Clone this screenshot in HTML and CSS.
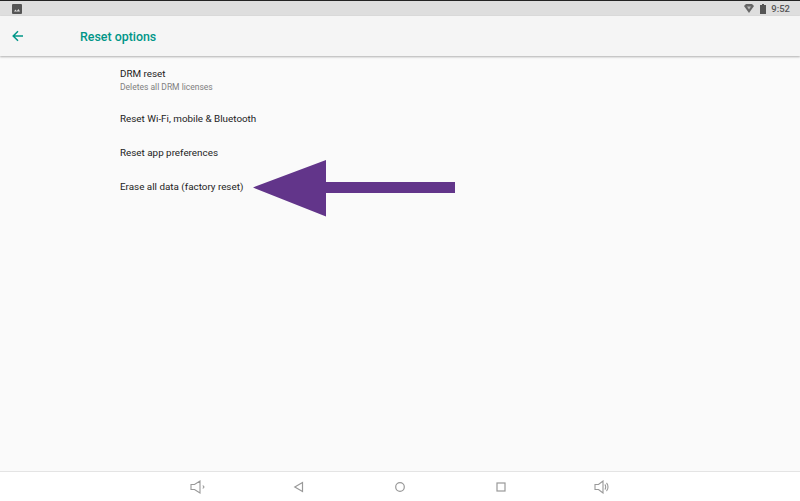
FILE: index.html
```html
<!DOCTYPE html>
<html lang="en">
<head>
<meta charset="utf-8">
<title>Reset options</title>
<link rel="stylesheet" href="styles.css">
</head>
<body>
<div class="screen">
  <div class="status">
    <svg class="st-img" width="10" height="10" viewBox="0 0 10 10"><rect width="10" height="10" rx="1" fill="#555"/><path d="M2 7.500 3.500 5.500 5 7.500ZM4.500 7.500 6.500 5 8 7.500Z" fill="#ddd"/></svg>
    <div class="status-right">
      <svg width="10" height="9" viewBox="0 0 10 9"><path d="M0 2 2 0H8L10 2 5 9Z" fill="#666"/><path d="M3 2.500 5 5.500 7 2.500Z" fill="#bbb"/></svg>
      <svg class="batt" width="6" height="10" viewBox="0 0 6 10"><path d="M2 0H4V1H6V10H0V1H2Z" fill="#555"/></svg>
      <span class="time">9:52</span>
    </div>
  </div>
  <header class="appbar">
    <svg class="back" width="12" height="12" viewBox="0 0 12 12"><path d="M11 6H1.500M6 1.200 1.200 6 6 10.800" fill="none" stroke="#009688" stroke-width="1.500"/></svg>
    <h1 class="title">Reset options</h1>
  </header>
  <main class="content">
    <div class="item item-first">
      <div class="item-title">DRM reset</div>
      <div class="item-sub">Deletes all DRM licenses</div>
    </div>
    <div class="item"><div class="item-title">Reset Wi-Fi, mobile &amp; Bluetooth</div></div>
    <div class="item"><div class="item-title">Reset app preferences</div></div>
    <div class="item"><div class="item-title">Erase all data (factory reset)</div></div>
    <svg class="arrow" width="203" height="57" viewBox="0 0 203 57"><path d="M0 27.500 73 0V22H202V33H73V56.500Z" fill="#62358a"/></svg>
  </main>
  <nav class="navbar">
    <svg width="16" height="14" viewBox="0 0 16 14"><path d="M1 4.500H4.500L10 1V13L4.500 9.500H1Z M12.800 5.500 14 7 12.800 8.500" fill="none" stroke="#999" stroke-width="1.100"/></svg>
    <svg width="12" height="12" viewBox="0 0 12 12"><path d="M9.500 1.500V10.500L1.800 6Z" fill="none" stroke="#999" stroke-width="1.200"/></svg>
    <svg width="12" height="12" viewBox="0 0 12 12"><circle cx="6" cy="6" r="4.300" fill="none" stroke="#999" stroke-width="1.200"/></svg>
    <svg width="12" height="12" viewBox="0 0 12 12"><rect x="2" y="2" width="8" height="8" fill="none" stroke="#999" stroke-width="1.200"/></svg>
    <svg width="16" height="14" viewBox="0 0 16 14"><path d="M1 4.500H4.500L9 1V13L4.500 9.500H1Z M10.800 4.500C12 5.500 12 8.500 10.800 9.500M12.500 3C14.500 5 14.500 9 12.500 11" fill="none" stroke="#999" stroke-width="1.100"/></svg>
  </nav>
</div>
</body>
</html>
```
FILE: styles.css
```css
* { box-sizing: border-box; }
html, body { margin: 0; padding: 0; }
body { width: 800px; height: 501px; overflow: hidden; font-family: Roboto, "Liberation Sans", sans-serif; }
.screen { width: 800px; height: 501px; display: flex; flex-direction: column; background: #fafafa; border-top: 1px solid #222; }
.status { height: 15px; flex: none; background: #dedede; display: flex; align-items: center; justify-content: space-between; padding: 0 10px 0 12px; }
.st-img { display: block; }
.status-right { display: flex; align-items: center; }
.batt { margin-left: 6px; }
.time { margin-left: 5px; font-size: 9.500px; font-weight: 500; color: #555; }
.appbar { height: 40px; flex: none; background: #f5f5f5; display: flex; align-items: center; padding-left: 12px; box-shadow: 0 1px 2px rgba(0,0,0,.3); position: relative; }
.back { display: block; }
.title { margin: 0 0 0 56px; font-size: 12.400px; font-weight: 500; color: #009688; }
.content { flex: 1; position: relative; padding: 4px 0 0 120px; }
.item { height: 34px; display: flex; flex-direction: column; justify-content: center; }
.item-first { height: 40px; margin-bottom: 2px; }
.item-title { font-size: 9.850px; color: #222; line-height: 14px; }
.item-sub { font-size: 8.500px; color: #808080; line-height: 12px; }
.arrow { position: absolute; left: 253px; top: 104px; }
.navbar { height: 30px; flex: none; background: #fff; border-top: 1px solid #e4e4e4; display: grid; grid-template-columns: repeat(5, 101px); justify-content: center; justify-items: center; align-items: center; }
```
